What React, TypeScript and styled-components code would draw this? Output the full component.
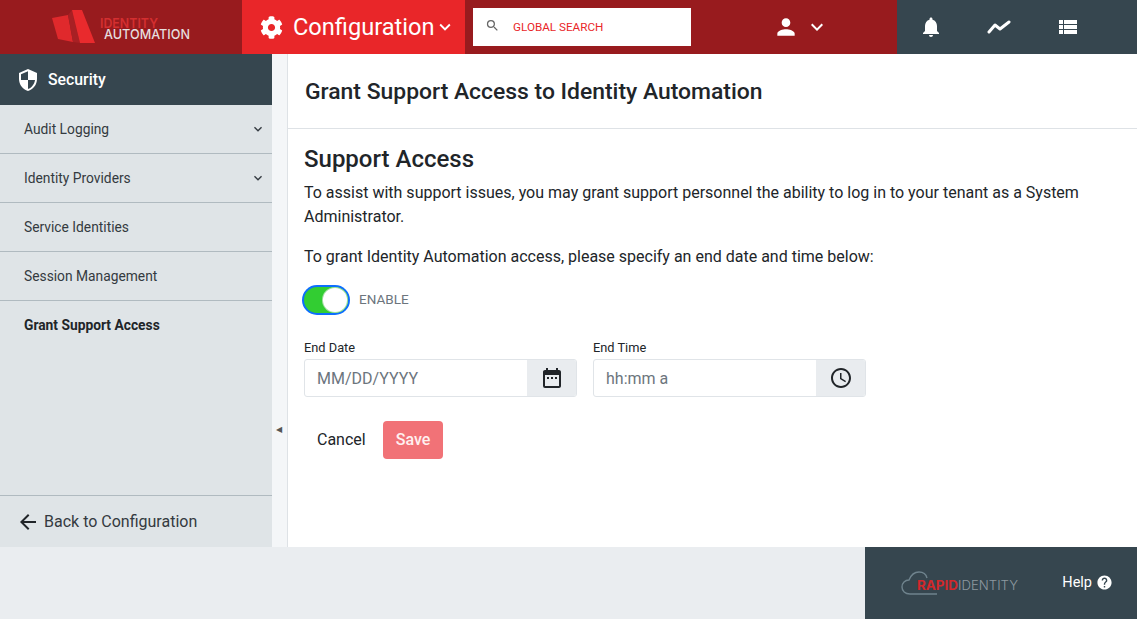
import React from 'react';
import styled, { createGlobalStyle } from 'styled-components';
import { FaCog } from 'react-icons/fa';
import {
  MdSecurity, MdKeyboardArrowDown, MdSearch, MdPerson, MdNotifications,
  MdDateRange, MdAccessTime, MdHelp, MdArrowBack,
} from 'react-icons/md';

const GlobalStyle = createGlobalStyle`
  html, body { margin: 0; padding: 0; }
  body { font-family: Roboto, 'Liberation Sans', sans-serif; color: #212529; overflow: hidden; }
  * { box-sizing: border-box; }
`;

const Page = styled.div`
  width: 100%;
  height: 100vh;
  display: grid;
  grid-template-rows: 54px 493px 72px;
  overflow: hidden;
`;

const TopBar = styled.header`
  display: flex;
  background: #981b1e;
  color: #fff;
`;

const Brand = styled.div`
  width: 242px;
  display: flex;
  align-items: center;
  padding-left: 52px;
`;

const LogoSvg = styled.svg`
  display: block;
  font-family: Inter, sans-serif;
  font-size: 13.7px;
  font-weight: 500;
`;

const ModuleButton = styled.div`
  width: 223px;
  background: #e92629;
  display: flex;
  align-items: center;
  padding-left: 18px;
  font-size: 23.6px;
  svg:first-child { margin-right: 10px; }
`;

const SearchBox = styled.div`
  width: 218px;
  height: 38px;
  margin: 8px 0 0 8px;
  background: #fff;
  display: flex;
  align-items: center;
  padding-left: 12px;
  color: #e92629;
  font-size: 11.7px;
  svg { color: #666; margin-right: 13px; margin-top: -3px; }
`;

const UserMenu = styled.div`
  flex: 1;
  display: flex;
  align-items: center;
  padding-left: 82px;
  gap: 6px;
`;

const ToolBar = styled.div`
  width: 240px;
  background: #36464f;
  display: flex;
  align-items: center;
  padding-left: 22px;
`;

const ToolSlot = styled.div<{ $width?: number }>`
  width: ${({ $width }) => ($width ? `${$width}px` : 'auto')};
  display: flex;
  align-items: center;
`;

const Body = styled.div`
  display: flex;
  min-height: 0;
`;

const Sidebar = styled.aside`
  width: 272px;
  background: #dfe4e7;
  display: flex;
  flex-direction: column;
`;

const SideTitle = styled.div`
  height: 51px;
  background: #36464f;
  color: #fff;
  display: flex;
  align-items: center;
  padding-left: 16px;
  gap: 8px;
  font-size: 15.8px;
  font-weight: 500;
`;

const NavList = styled.ul`
  list-style: none;
  margin: 0;
  padding: 0;
  flex: 1;
`;

const NavItem = styled.li<{ $active?: boolean; $last?: boolean }>`
  height: 49px;
  display: flex;
  align-items: center;
  justify-content: space-between;
  padding: 0 6px 0 24px;
  font-size: 13.8px;
  font-weight: ${({ $active }) => ($active ? 700 : 400)};
  color: ${({ $active }) => ($active ? '#212529' : '#343a40')};
  border-bottom: 1px solid ${({ $last }) => ($last ? 'transparent' : '#b0bac0')};
`;

const BackRow = styled.div`
  height: 52px;
  border-top: 1px solid #b0bac0;
  display: flex;
  align-items: center;
  padding-left: 16px;
  gap: 4px;
  font-size: 16px;
  color: #343a40;
  svg { color: #212529; }
`;

const Collapser = styled.div`
  width: 16px;
  background: #f4f6f8;
  border-right: 1px solid #dee2e6;
  display: flex;
  align-items: center;
  justify-content: center;
  padding-top: 257px;
  padding-right: 1px;
  color: #555;
  font-size: 8px;
`;

const Main = styled.main`
  flex: 1;
  background: #fff;
`;

const PageHeader = styled.div`
  height: 75px;
  border-bottom: 1px solid #dee2e6;
  display: flex;
  align-items: center;
  padding: 1px 17px 0;
`;

const PageTitle = styled.h1`
  margin: 0;
  font-size: 22.9px;
  line-height: 29px;
  font-weight: 500;
`;

const Content = styled.section`
  padding: 16px 16px 0;
`;

const SectionTitle = styled.h2`
  margin: 0 0 7px;
  font-size: 24px;
  line-height: 29px;
  font-weight: 500;
`;

const Paragraph = styled.p`
  margin: 0 0 16px;
  font-size: 16px;
  line-height: 24px;
`;

const ToggleRow = styled.div`
  display: flex;
  align-items: center;
  gap: 11px;
  padding: 2px 0;
  margin-bottom: 25px;
`;

const ToggleLabel = styled.span`
  color: #6c757d;
  font-size: 13.5px;
  margin-top: -2px;
`;

const Toggle = styled.div`
  width: 44px;
  height: 26px;
  border-radius: 13px;
  background: #32cd32;
  box-shadow: 0 0 0 2px #0d6efd;
  padding: 1px;
  display: flex;
  justify-content: flex-end;
  &::after {
    content: '';
    width: 24px;
    height: 24px;
    border-radius: 50%;
    background: #fff;
    box-shadow: 0 0 0 1px #a5e0a5;
  }
`;

const Fields = styled.div`
  display: flex;
  gap: 16px;
  margin-bottom: 24px;
`;

const Field = styled.div`
  width: 273px;
`;

const FieldLabel = styled.label`
  display: block;
  font-size: 12.8px;
  line-height: 15px;
  margin-bottom: 4px;
`;

const InputGroup = styled.div`
  display: flex;
  height: 38px;
  border: 1px solid #e0e4e8;
  border-radius: 3px;
  overflow: hidden;
`;

const Placeholder = styled.div`
  flex: 1;
  display: flex;
  align-items: center;
  padding-left: 12px;
  color: #6c757d;
  font-size: 16px;
`;

const Addon = styled.div`
  width: 49px;
  background: #e9ecef;
  display: flex;
  align-items: center;
  justify-content: center;
  color: #212529;
`;

const Actions = styled.div`
  display: flex;
  align-items: center;
`;

const CancelButton = styled.button`
  width: 79px;
  height: 38px;
  border: 0;
  background: none;
  padding: 0 0 2px 13px;
  text-align: left;
  font: 400 16px Roboto, sans-serif;
  color: #212529;
`;

const SaveButton = styled.button`
  width: 60px;
  height: 38px;
  border: 0;
  border-radius: 4px;
  padding: 0 0 2px;
  background: #f17277;
  color: #fff0f0;
  font: 500 16px Roboto, sans-serif;
`;

const Footer = styled.footer`
  display: flex;
  justify-content: flex-end;
  background: #eaedf0;
`;

const FooterPanel = styled.div`
  width: 272px;
  background: #36464f;
  display: flex;
  align-items: center;
  padding: 0 24px 0 36px;
  justify-content: space-between;
  color: #fff;
`;

const RapidSvg = styled.svg`
  display: block;
  font-family: Inter, sans-serif;
  font-size: 12.5px;
  font-weight: 300;
`;

const HelpLink = styled.div`
  display: flex;
  align-items: center;
  gap: 4px;
  font-size: 14.5px;
  font-weight: 400;
  margin-top: -2px;
`;

const LogoMark = () => (
  <LogoSvg width="146" height="54" viewBox="0 0 146 54">
    <polygon points="0,18 16,15 21,42 6,39" fill="#e0292c" />
    <polygon points="16,15 20,10 28,43 21,42" fill="#a82024" />
    <polygon points="20,10 30,10 43,43 28,43" fill="#e92a2d" />
    <text x="48" y="28" fill="#d42f30" fontWeight="600" textLength="58" lengthAdjust="spacingAndGlyphs">IDENTITY</text>
    <text x="52" y="39" fill="#e5dede" textLength="86" lengthAdjust="spacingAndGlyphs">AUTOMATION</text>
  </LogoSvg>
);

const RapidLogo = () => (
  <RapidSvg width="118" height="28" viewBox="0 0 118 28">
    <path d="M36 25H9C4 25 1 22 1 18C1 14 4 11 8 11C10 6 14 3 18 3C22 3 25 5 26 9" fill="none" stroke="#6f838d" strokeWidth="1.4" />
    <text x="16" y="21" fill="#d3282b" fontWeight="700" textLength="41" lengthAdjust="spacingAndGlyphs">RAPID</text>
    <text x="57" y="21" fill="#8d989f" textLength="60" lengthAdjust="spacingAndGlyphs">IDENTITY</text>
  </RapidSvg>
);

const TrendIcon = () => (
  <svg width="24" height="14" viewBox="0 0 24 14" fill="none" stroke="#fff" strokeWidth="3" strokeLinecap="round" strokeLinejoin="round">
    <polyline points="2,12 8,5 13,9 22,2" />
  </svg>
);

const TableIcon = () => (
  <svg width="18" height="14" viewBox="0 0 18 14" fill="#fff" style={{ marginTop: -1 }}>
    <rect x="0" y="0" width="4" height="4" />
    <rect x="5" y="0" width="13" height="4" />
    <rect x="0" y="5" width="4" height="4" />
    <rect x="5" y="5" width="13" height="4" />
    <rect x="0" y="10" width="4" height="4" />
    <rect x="5" y="10" width="13" height="4" />
  </svg>
);

const sections = ['Audit Logging', 'Identity Providers', 'Service Identities', 'Session Management'];
const expandable = ['Audit Logging', 'Identity Providers'];

export default function App() {
  return (
    <Page>
      <GlobalStyle />
      <TopBar>
        <Brand>
          <LogoMark />
        </Brand>
        <ModuleButton>
          <FaCog size={23} />
          Configuration
          <MdKeyboardArrowDown size={22} />
        </ModuleButton>
        <SearchBox>
          <MdSearch size={15} />
          GLOBAL SEARCH
        </SearchBox>
        <UserMenu>
          <MdPerson size={26} />
          <MdKeyboardArrowDown size={24} />
        </UserMenu>
        <ToolBar>
          <ToolSlot $width={68}><MdNotifications size={24} /></ToolSlot>
          <ToolSlot $width={72}><TrendIcon /></ToolSlot>
          <ToolSlot><TableIcon /></ToolSlot>
        </ToolBar>
      </TopBar>
      <Body>
        <Sidebar>
          <SideTitle>
            <MdSecurity size={24} />
            Security
          </SideTitle>
          <NavList>
            {sections.map((s) => (
              <NavItem key={s}>
                {s}
                {expandable.includes(s) && <MdKeyboardArrowDown size={16} />}
              </NavItem>
            ))}
            <NavItem $active $last>Grant Support Access</NavItem>
          </NavList>
          <BackRow>
            <MdArrowBack size={24} />
            Back to Configuration
          </BackRow>
        </Sidebar>
        <Collapser>◀</Collapser>
        <Main>
          <PageHeader>
            <PageTitle>Grant Support Access to Identity Automation</PageTitle>
          </PageHeader>
          <Content>
            <SectionTitle>Support Access</SectionTitle>
            <Paragraph>
              To assist with support issues, you may grant support personnel the ability to log in to your tenant as a System Administrator.
            </Paragraph>
            <Paragraph>To grant Identity Automation access, please specify an end date and time below:</Paragraph>
            <ToggleRow>
              <Toggle />
              <ToggleLabel>ENABLE</ToggleLabel>
            </ToggleRow>
            <Fields>
              <Field>
                <FieldLabel>End Date</FieldLabel>
                <InputGroup>
                  <Placeholder>MM/DD/YYYY</Placeholder>
                  <Addon><MdDateRange size={24} /></Addon>
                </InputGroup>
              </Field>
              <Field>
                <FieldLabel>End Time</FieldLabel>
                <InputGroup>
                  <Placeholder>hh:mm a</Placeholder>
                  <Addon><MdAccessTime size={24} /></Addon>
                </InputGroup>
              </Field>
            </Fields>
            <Actions>
              <CancelButton>Cancel</CancelButton>
              <SaveButton>Save</SaveButton>
            </Actions>
          </Content>
        </Main>
      </Body>
      <Footer>
        <FooterPanel>
          <RapidLogo />
          <HelpLink>
            Help
            <MdHelp size={17} />
          </HelpLink>
        </FooterPanel>
      </Footer>
    </Page>
  );
}
